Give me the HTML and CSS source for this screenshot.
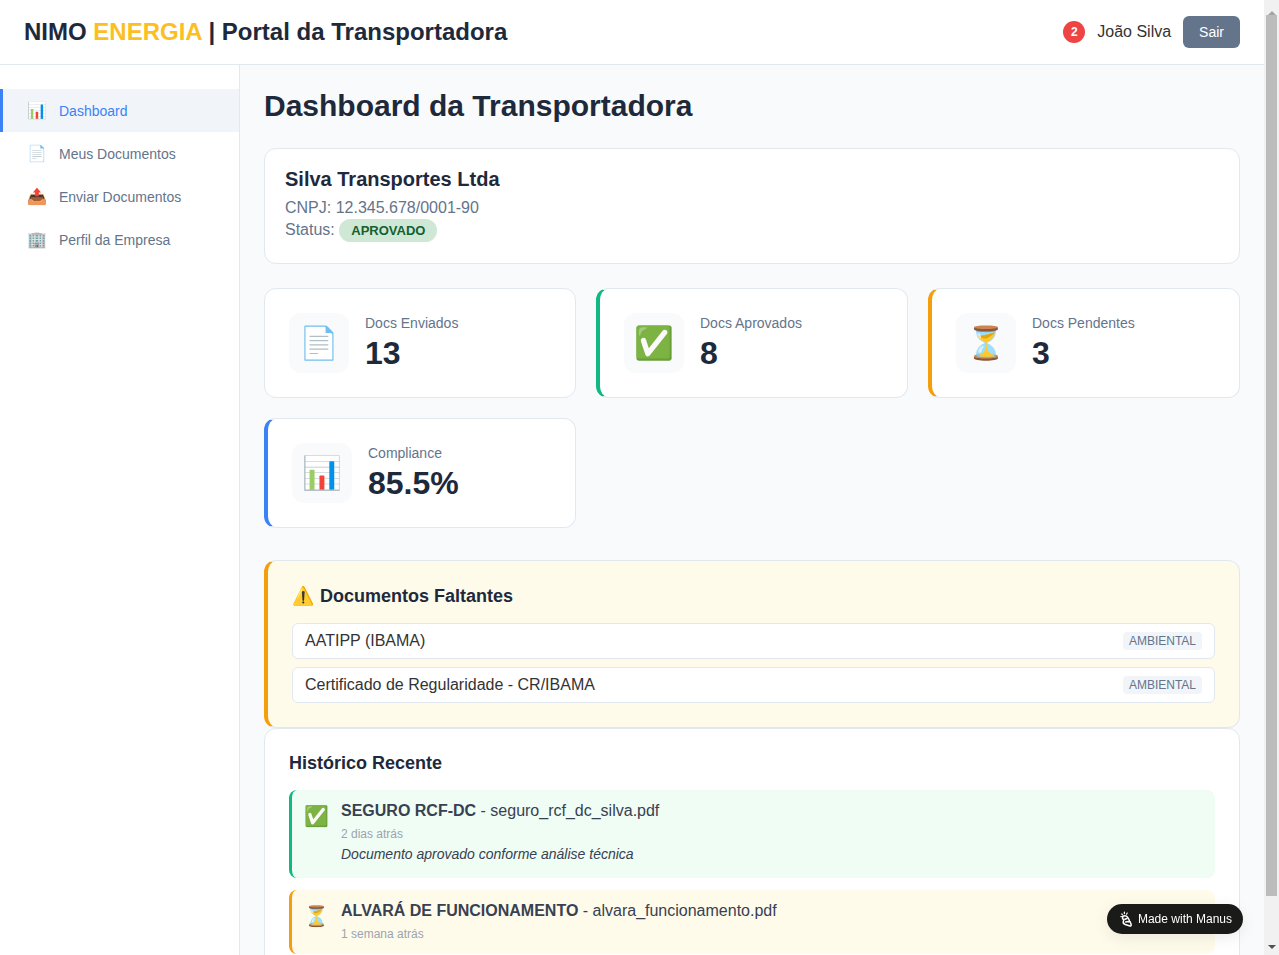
FILE: index.html
```html
<!DOCTYPE html>
<html lang="pt-BR">
<head>
  <meta charset="UTF-8" />
  <title>Portal da Transportadora</title>
  <link rel="stylesheet" href="styles.css">
</head>
<body>
  <header class="topbar">
    <h1 class="brand">NIMO <span class="brand-accent">ENERGIA</span> | Portal da Transportadora</h1>
    <div class="user-box">
      <span class="notif">2</span>
      <span class="user-name">João Silva</span>
      <button class="logout">Sair</button>
    </div>
  </header>

  <div class="layout">
    <nav class="sidebar">
      <a class="nav-item active"><span class="nav-icon">📊</span>Dashboard</a>
      <a class="nav-item"><span class="nav-icon">📄</span>Meus Documentos</a>
      <a class="nav-item"><span class="nav-icon">📤</span>Enviar Documentos</a>
      <a class="nav-item"><span class="nav-icon">🏢</span>Perfil da Empresa</a>
    </nav>

    <main class="content">
      <h2 class="page-title">Dashboard da Transportadora</h2>

      <section class="company-card">
        <h3>Silva Transportes Ltda</h3>
        <p>CNPJ: 12.345.678/0001-90</p>
        <p>Status: <span class="status-pill">APROVADO</span></p>
      </section>

      <section class="stats">
        <div class="stat">
          <div class="stat-icon">📄</div>
          <div><div class="stat-label">Docs Enviados</div><div class="stat-value">13</div></div>
        </div>
        <div class="stat stat-green">
          <div class="stat-icon">✅</div>
          <div><div class="stat-label">Docs Aprovados</div><div class="stat-value">8</div></div>
        </div>
        <div class="stat stat-orange">
          <div class="stat-icon">⏳</div>
          <div><div class="stat-label">Docs Pendentes</div><div class="stat-value">3</div></div>
        </div>
        <div class="stat stat-blue">
          <div class="stat-icon">📊</div>
          <div><div class="stat-label">Compliance</div><div class="stat-value">85.5%</div></div>
        </div>
      </section>

      <section class="missing">
        <h3><span class="warn-icon">⚠️</span> Documentos Faltantes</h3>
        <div class="missing-item"><span>AATIPP (IBAMA)</span><span class="tag">AMBIENTAL</span></div>
        <div class="missing-item"><span>Certificado de Regularidade - CR/IBAMA</span><span class="tag">AMBIENTAL</span></div>
      </section>

      <section class="history">
        <h3>Histórico Recente</h3>
        <div class="hist-item hist-ok">
          <div class="hist-icon">✅</div>
          <div>
            <div class="hist-title"><strong>SEGURO RCF-DC</strong> - seguro_rcf_dc_silva.pdf</div>
            <div class="hist-time">2 dias atrás</div>
            <div class="hist-note">Documento aprovado conforme análise técnica</div>
          </div>
        </div>
        <div class="hist-item hist-wait">
          <div class="hist-icon">⏳</div>
          <div>
            <div class="hist-title"><strong>ALVARÁ DE FUNCIONAMENTO</strong> - alvara_funcionamento.pdf</div>
            <div class="hist-time">1 semana atrás</div>
          </div>
        </div>
      </section>
    </main>
  </div>

  <div class="manus-badge">
    <svg class="manus-icon" viewBox="0 0 16 18" width="14" height="16" fill="none" stroke="#fff" stroke-width="1.7" stroke-linecap="round" stroke-linejoin="round">
      <path d="M3 6.500c1.500-1.600 4.200-1.600 5.400.2l2 3c.7 1 .4 2-.4 2.600"/>
      <path d="M3 6.500c-.6 1.600.2 2.800 1.400 3.600l-.6 1.600c-.4 1.400.6 3 2.200 3.600l5.400 1.600c1 .2 1.600-.6 1.400-1.400l-.6-2c-.2-1-1-1.800-1.800-2"/>
      <path d="M5.600 9.300l2.400-.9M6.500 12.400l3-.6"/>
      <path d="M2 3.200l.8 1M5 1v1.800M8.200 2.200l-.7 1.300M1 6.200h.6" stroke-width="1.400"/>
    </svg>
    Made with Manus
  </div>

  <div class="fake-scrollbar">
    <span class="arrow-up"></span>
    <div class="scroll-track"><div class="scroll-thumb"></div></div>
    <span class="arrow-down"></span>
  </div>
</body>
</html>
```
FILE: styles.css
```css
* {
  box-sizing: border-box;
}
body {
  margin: 0;
  padding-right: 15px;
  font-family: "Liberation Sans", Arial, sans-serif;
  background: #f8fafc;
  color: #333;
}
.topbar {
  display: flex;
  justify-content: space-between;
  align-items: center;
  height: 65px;
  padding: 0 24px;
  background: #fff;
  border-bottom: 1px solid #e2e8f0;
}
.brand {
  margin: 0;
  font-size: 24px;
  color: #1e293b;
}
.brand-accent {
  color: #fbbf24;
}
.user-box {
  display: flex;
  align-items: center;
  gap: 12px;
}
.notif {
  width: 22px;
  height: 22px;
  border-radius: 50%;
  background: #ef4444;
  color: #fff;
  font-size: 12px;
  font-weight: bold;
  display: flex;
  align-items: center;
  justify-content: center;
}
.user-name {
  font-size: 16px;
}
.logout {
  padding: 8px 16px;
  height: 32px;
  border: none;
  border-radius: 6px;
  background: #64748b;
  color: #fff;
  font-family: inherit;
  font-size: 14px;
}
.layout {
  display: flex;
}
.sidebar {
  flex: 0 0 240px;
  padding-top: 24px;
  background: #fff;
  border-right: 1px solid #e2e8f0;
}
.nav-item {
  display: flex;
  align-items: center;
  gap: 12px;
  height: 43px;
  padding: 0 24px;
  border-left: 3px solid transparent;
  color: #64748b;
  font-size: 14px;
}
.nav-item.active {
  background: #f1f5f9;
  border-left-color: #3b82f6;
  color: #3b82f6;
}
.nav-icon {
  width: 20px;
  font-size: 16px;
}
.content {
  flex: 1;
  min-width: 0;
  padding: 24px;
}
.page-title {
  margin: 0 0 25px;
  font-size: 30px;
  line-height: 34px;
  color: #1e293b;
}
.company-card {
  padding: 19px 20px 20px;
  margin-bottom: 24px;
  background: #fff;
  border: 1px solid #e2e8f0;
  border-radius: 12px;
  color: #64748b;
}
.company-card h3 {
  margin: 0 0 8px;
  font-size: 20px;
  color: #1e293b;
}
.company-card p {
  margin: 0 0 2px;
}
.company-card p + p {
  margin-bottom: 1px;
}
.status-pill {
  display: inline-block;
  padding: 4px 12px;
  border-radius: 12px;
  background: #cfe8d5;
  color: #14602f;
  font-size: 13px;
  font-weight: bold;
}
.stats {
  display: grid;
  grid-template-columns: repeat(3, 1fr);
  gap: 20px;
  margin-bottom: 32px;
}
.stat {
  display: flex;
  align-items: center;
  gap: 16px;
  height: 110px;
  padding: 24px;
  background: #fff;
  border: 1px solid #e2e8f0;
  border-radius: 12px;
}
.stat-green {
  border-left: 4px solid #10b981;
}
.stat-orange {
  border-left: 4px solid #f59e0b;
}
.stat-blue {
  border-left: 4px solid #3b82f6;
}
.stat-icon {
  flex: 0 0 60px;
  height: 60px;
  display: flex;
  align-items: center;
  justify-content: center;
  background: #f8fafc;
  border-radius: 12px;
  font-size: 32px;
}
.stat-label {
  margin-bottom: 4px;
  font-size: 14px;
  color: #64748b;
}
.stat-value {
  font-size: 32px;
  font-weight: bold;
  color: #1e293b;
}
.missing {
  padding: 24px;
  background: #fffbeb;
  border: 1px solid #e2e8f0;
  border-left: 4px solid #f59e0b;
  border-radius: 12px;
}
.missing h3,
.history h3 {
  margin: 0 0 16px;
  font-size: 18px;
  color: #1e293b;
}
.warn-icon {
  margin-right: 1px;
}
.missing-item {
  display: flex;
  justify-content: space-between;
  align-items: center;
  padding: 8px 12px;
  margin-bottom: 8px;
  background: #fff;
  border: 1px solid #e2e8f0;
  border-radius: 6px;
  font-size: 16px;
}
.missing-item:last-child {
  margin-bottom: 0;
}
.tag {
  padding: 2px 6px;
  background: #f1f5f9;
  border-radius: 4px;
  font-size: 12px;
  color: #64748b;
}
.history {
  padding: 24px;
  background: #fff;
  border: 1px solid #e2e8f0;
  border-radius: 12px;
}
.hist-item {
  display: flex;
  gap: 12px;
  padding: 12px;
  margin-bottom: 12px;
  border-left: 3px solid transparent;
  border-radius: 8px;
}
.hist-ok {
  background: #f0fdf4;
  border-left-color: #10b981;
}
.hist-wait {
  background: #fffbeb;
  border-left-color: #f59e0b;
}
.hist-icon {
  width: 25px;
  padding-top: 2px;
  font-size: 20px;
  text-align: center;
}
.hist-title {
  margin-bottom: 7px;
  font-size: 16px;
  color: #374151;
}
.hist-time {
  margin-bottom: 1px;
  font-size: 12px;
  color: #9ca3af;
}
.hist-note {
  margin: 5px 0 4px;
  font-size: 14px;
  font-style: italic;
  color: #374151;
}
.manus-badge {
  position: fixed;
  right: 36px;
  bottom: 21px;
  display: flex;
  align-items: center;
  gap: 4px;
  height: 30px;
  padding: 0 11px 0 13px;
  background: #1a1a18;
  border-radius: 15px;
  box-shadow: 0 4px 16px rgba(0, 0, 0, 0.08);
  color: #fff;
  font-size: 12px;
}
.fake-scrollbar {
  position: fixed;
  top: 0;
  right: 0;
  bottom: 0;
  width: 15px;
  display: flex;
  flex-direction: column;
  align-items: center;
  background: #f1f1f1;
}
.arrow-up,
.arrow-down {
  width: 0;
  border-left: 4px solid transparent;
  border-right: 4px solid transparent;
}
.arrow-up {
  flex: 0 0 15px;
  border-top: 5px solid transparent;
  border-bottom: 4px solid #a3a3a3;
}
.arrow-down {
  flex: 0 0 10px;
  margin-top: 5px;
  border-top: 4px solid #505050;
}
.scroll-track {
  flex: 1;
  width: 100%;
  padding: 0 2px;
}
.scroll-thumb {
  height: 881px;
  background: #bcbcbc;
}
```
